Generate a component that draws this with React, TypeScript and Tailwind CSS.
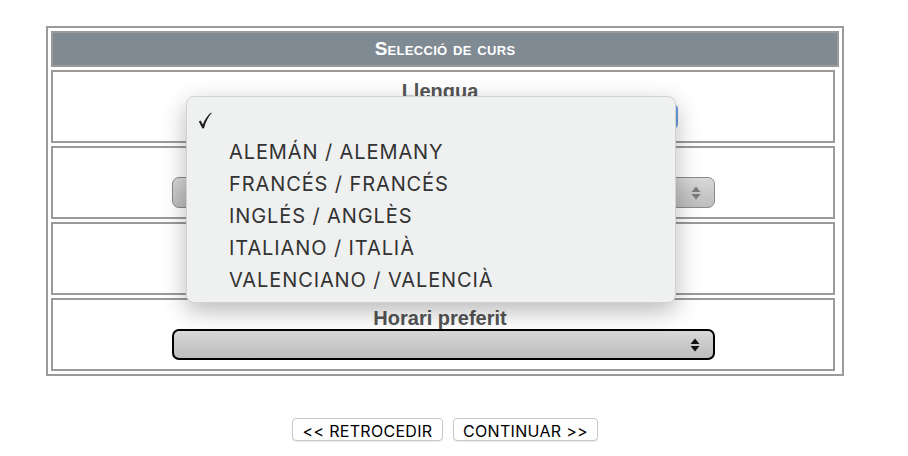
import React from 'react';

const options = [
  'ALEMÁN / ALEMANY',
  'FRANCÉS / FRANCÉS',
  'INGLÉS / ANGLÈS',
  'ITALIANO / ITALIÀ',
  'VALENCIANO / VALENCIÀ',
];

function Arrows({ color }: { color: string }) {
  return (
    <svg width="10" height="14" viewBox="0 0 10 14">
      <path d="M5 0.5 L9.5 6 L0.5 6 Z" fill={color} />
      <path d="M5 13.5 L9.5 8 L0.5 8 Z" fill={color} />
    </svg>
  );
}

function Check() {
  return (
    <svg width="14" height="17" viewBox="0 0 14 17">
      <path
        d="M0.8 9.6 L2.6 8.4 L4.9 12.4 C6.8 7.6 9.6 3.4 13.2 0.6 L13.6 1.2 C10.4 4.6 7.8 9.6 6.0 16.2 L4.4 16.4 Z"
        fill="#1e1e1e"
      />
    </svg>
  );
}

function FakeSelect({ dark }: { dark?: boolean }) {
  return (
    <div
      className={
        'w-[543px] h-[31px] rounded-[7px] flex items-center justify-end pr-[13px] bg-gradient-to-b from-[#d9d9d9] via-[#c9c9c9] to-[#bdbdbd] ' +
        (dark ? 'border-2 border-black' : 'border border-[#8a8a8a]')
      }
    >
      <Arrows color={dark ? '#111' : '#7a7a7a'} />
    </div>
  );
}

export default function App() {
  return (
    <main className="min-h-screen bg-white font-['Liberation_Sans',Arial,sans-serif]">
      <div className="relative pt-[26px] ml-[46px] w-[798px]">
        {/* Course selection table */}
        <div className="border-2 border-[#9a9a9a] p-[3px] flex flex-col gap-[3px]">
          <div className="w-[788px] h-[36px] border-2 border-[#9a9a9a] bg-[#7f8a93] flex items-center justify-center">
            <span className="text-white font-bold text-[19px] [font-variant:small-caps] tracking-[0.3px]">
              Selecció de curs
            </span>
          </div>

          <div className="w-[784px] h-[73px] border-2 border-[#9a9a9a] flex flex-col items-center pt-[8px]">
            <p className="text-[20px] font-bold text-[#555] leading-[23px] pr-[6px]">Llengua</p>
            <div className="w-[480px] h-[25px] mt-[1px] ml-[-10px] rounded-[5px] border-2 border-[#6b9fe0]" />
          </div>

          {/* label of this row sits under the open menu */}
          <div className="w-[784px] h-[73px] border-2 border-[#9a9a9a] flex flex-col items-center pt-[7px]">
            <div className="h-[22px]" />
            <FakeSelect />
          </div>

          <div className="w-[784px] h-[73px] border-2 border-[#9a9a9a]" />

          <div className="w-[784px] h-[73px] border-2 border-[#9a9a9a] flex flex-col items-center pt-[7px]">
            <p className="text-[20px] font-bold text-[#555] leading-[22px] pr-[6px]">Horari preferit</p>
            <FakeSelect dark />
          </div>
        </div>

        {/* Navigation buttons */}
        <div className="mt-[42px] flex justify-center gap-[10px] font-['Inter',sans-serif]">
          <button className="w-[151px] h-[23px] rounded-[4px] border border-[#c9c9c9] bg-white text-[16px] tracking-[0.3px] text-black shadow-[0_1px_1px_rgba(0,0,0,0.08)]">
            &lt;&lt; RETROCEDIR
          </button>
          <button className="w-[145px] h-[23px] rounded-[4px] border border-[#c9c9c9] bg-white text-[16px] tracking-[0.3px] text-black shadow-[0_1px_1px_rgba(0,0,0,0.08)]">
            CONTINUAR &gt;&gt;
          </button>
        </div>

        {/* Open dropdown menu */}
        <div className="absolute left-[140px] top-[96px] w-[490px] h-[207px] rounded-[8px] bg-[#eff0f0] border border-[#d2d2d2] shadow-[0_8px_24px_rgba(0,0,0,0.28)] pt-[7px] font-['Inter',sans-serif]">
          <div className="h-[32px] flex items-center pl-[11px]">
            <Check />
          </div>
          {options.map((o) => (
            <div key={o} className="h-[32px] flex items-center pl-[42px] text-[20px] tracking-[0.9px] text-[#333]">
              {o}
            </div>
          ))}
        </div>
      </div>
    </main>
  );
}
